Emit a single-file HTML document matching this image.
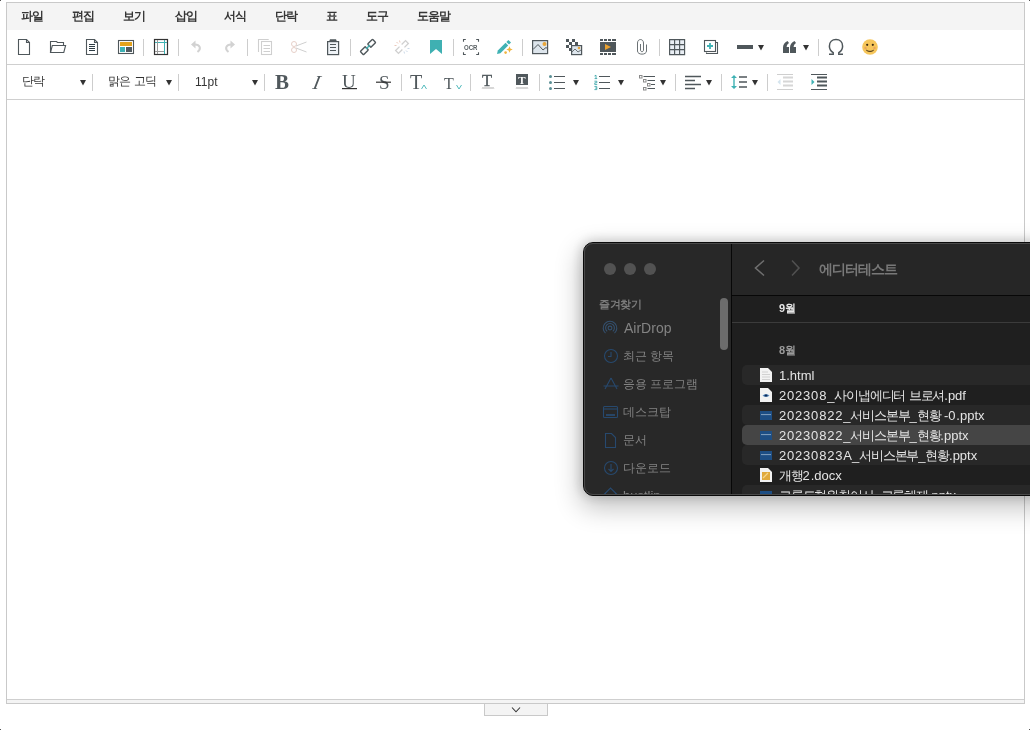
<!DOCTYPE html>
<html><head><meta charset="utf-8">
<style>
*{box-sizing:border-box;margin:0;padding:0}
html,body{width:1030px;height:730px;overflow:hidden;background:#fff;font-family:"Liberation Sans",sans-serif;position:relative}
.mi,.dd,.si,.sh,.fn,.tx{will-change:transform}
#frame{position:absolute;left:6px;top:2px;width:1019px;height:702px;border:1px solid #c9c9c9}
#menubar{position:absolute;left:0;top:0;width:1017px;height:27px;background:#f4f4f4}
.mi{position:absolute;top:4.5px;font-size:12px;font-weight:bold;color:#363636;line-height:16px;white-space:nowrap;letter-spacing:-1px}
#tb1{position:absolute;left:0;top:27px;width:1017px;height:35px;border-bottom:1px solid #cfcfcf;background:#fff}
#tb2{position:absolute;left:0;top:62px;width:1017px;height:35px;border-bottom:1px solid #cfcfcf;background:#fff}
#status{position:absolute;left:0;top:696px;width:1017px;height:4px;border-top:1px solid #cfcfcf;background:#f4f4f4}
.dd{position:absolute;font-size:12px;color:#333;white-space:nowrap;line-height:14px}
svg.ic{position:absolute;left:0;top:0;overflow:visible}
#handle{position:absolute;left:484px;top:704px;width:64px;height:12px;background:#f4f4f4;border:1px solid #c9c9c9;border-top:none}
/* finder */
#shadow{position:absolute;left:583px;top:242px;width:470px;height:253px;border-radius:10px;box-shadow:0 0 12px 2px rgba(0,0,0,0.16),0 10px 26px 3px rgba(0,0,0,0.24)}
#finder{position:absolute;left:583px;top:242px;width:470px;height:254px;border-radius:10px;overflow:hidden;background:#262626;border:1px solid #0a0a0a}
#fborder{position:absolute;left:584px;top:243px;width:468px;height:252px;border-radius:9px;box-shadow:inset 0 0 0 1px #4a4a4a;pointer-events:none}
#side{position:absolute;left:0;top:0;width:148px;height:254px;background:#282828;border-right:1px solid #070707}
.dot{position:absolute;top:20px;width:12px;height:12px;border-radius:6px;background:#525252}
.sh{position:absolute;font-size:10px;color:#7b7b7b;white-space:nowrap;line-height:12px}
.si{position:absolute;font-size:12px;color:#838383;white-space:nowrap;line-height:15px}
#main{position:absolute;left:148px;top:0;width:330px;height:254px;background:#1f1f1f}
#mtop{position:absolute;left:0;top:0;width:330px;height:53px;background:#262626;border-bottom:1px solid #070707}
.row{position:absolute;left:10px;width:320px;height:20px;border-radius:5px;background:#282828}
.k{letter-spacing:-1.2px;font-size:12.5px}
.d{letter-spacing:0.8px}
.fn{position:absolute;left:47px;font-size:13px;color:#e4e4e4;white-space:nowrap;line-height:15px}
</style></head><body>
<div id="frame">
  <div id="menubar">
    <div class="mi" style="left:14px">파일</div>
    <div class="mi" style="left:65px">편집</div>
    <div class="mi" style="left:116px">보기</div>
    <div class="mi" style="left:168px">삽입</div>
    <div class="mi" style="left:217px">서식</div>
    <div class="mi" style="left:268px">단락</div>
    <div class="mi" style="left:319px">표</div>
    <div class="mi" style="left:359px">도구</div>
    <div class="mi" style="left:410px">도움말</div>
  </div>
  <div id="tb1"></div>
  <div id="tb2"></div>
  <div id="status"></div>
</div>
<div class="dd" style="left:22px;top:74px;letter-spacing:-1px">단락</div>
<div class="dd" style="left:108px;top:74px;letter-spacing:-0.6px">맑은 고딕</div>
<div class="dd" style="left:195px;top:75px">11pt</div>
<svg class="ic" width="1030" height="110" viewBox="0 0 1030 110">
<!-- separators -->
<g fill="#cdcdcd">
<rect x="143" y="39" width="1" height="17"/><rect x="178" y="39" width="1" height="17"/><rect x="247" y="39" width="1" height="17"/>
<rect x="350" y="39" width="1" height="17"/><rect x="453" y="39" width="1" height="17"/><rect x="522" y="39" width="1" height="17"/>
<rect x="659" y="39" width="1" height="17"/><rect x="818" y="39" width="1" height="17"/>
<rect x="92" y="74" width="1" height="17"/><rect x="178" y="74" width="1" height="17"/><rect x="264" y="74" width="1" height="17"/>
<rect x="401" y="74" width="1" height="17"/><rect x="470" y="74" width="1" height="17"/><rect x="539" y="74" width="1" height="17"/>
<rect x="675" y="74" width="1" height="17"/><rect x="721" y="74" width="1" height="17"/><rect x="767" y="74" width="1" height="17"/>
</g>
<!-- dropdown arrows -->
<g fill="#333">
<path d="M80,80H86L83,85.5Z"/><path d="M166,80H172L169,85.5Z"/><path d="M252,80H258L255,85.5Z"/>
<path d="M573,80H579L576,85.5Z"/><path d="M618,80H624L621,85.5Z"/><path d="M660,80H666L663,85.5Z"/>
<path d="M706,80H712L709,85.5Z"/><path d="M752,80H758L755,85.5Z"/>
<path d="M758,45H764L761,50.5Z"/><path d="M803,45H809L806,50.5Z"/>
</g>
<g fill="none" stroke="#4f575b" stroke-width="1.1">
<!-- new doc -->
<path d="M18.5,39.5H26.5L29.5,42.5V54.5H18.5Z"/><path d="M26.5,39.5V42.5H29.5"/>
<!-- folder -->
<path d="M50.5,52.5V41.5H56.5L57.5,42.5H63.5V45.5"/><path d="M50.5,52.5H63.8L65.6,45.5H52.3Z"/>
<!-- doc lines -->
<path d="M86.5,39.5H94.5L97.5,42.5V54.5H86.5Z"/><path d="M94.5,39.5V42.5H97.5"/>
</g>
<g stroke="#2f3d45" stroke-width="1.2"><path d="M89,44.5H95M89,46.5H95M89,48.5H95M89,50.5H95"/></g>
<!-- template -->
<rect x="118.5" y="40.5" width="15" height="13" fill="none" stroke="#4f575b" stroke-width="1.1"/>
<rect x="120" y="42" width="12" height="4" fill="#e3a21c"/>
<rect x="120" y="47" width="5" height="5" fill="#3eb2b5"/>
<rect x="126" y="47" width="6" height="5" fill="#505a60"/>
<!-- table frame -->
<rect x="154.5" y="39.5" width="13" height="15" fill="none" stroke="#333" stroke-width="1.2"/>
<path d="M155,42.5H167M164.5,40V54" stroke="#3fb2b4" stroke-width="1"/>
<path d="M155,51.5H164M157.5,40V54" stroke="#9a9a9a" stroke-width="1"/>
<!-- undo / redo -->
<g fill="#d2d2d2"><path d="M191,44.5L195.5,40.5V48.5Z"/><path d="M225+0,0"/></g>
<path d="M195,44.5C199.5,44.5 202,48.5 197.5,52" fill="none" stroke="#d2d2d2" stroke-width="2"/>
<path d="M235,44.5L230.5,40.5V48.5Z" fill="#d2d2d2"/>
<path d="M231,44.5C226.5,44.5 224,48.5 228.5,52" fill="none" stroke="#d2d2d2" stroke-width="2"/>
<!-- copy -->
<g fill="none" stroke="#cfcfcf" stroke-width="1.1">
<path d="M258.5,52V39.5H268.7"/><rect x="261.5" y="41.5" width="10" height="13"/>
<path d="M263.5,45.5H270M263.5,48.5H270M263.5,51.5H270"/>
</g>
<!-- scissors -->
<g fill="none" stroke-width="1">
<circle cx="294" cy="44" r="2.5" stroke="#e6cfc8"/><circle cx="294" cy="50" r="2.5" stroke="#e6cfc8"/>
<path d="M296,46L306.5,42M296,48L306.5,52" stroke="#cfcfcf"/>
</g>
<!-- clipboard -->
<rect x="327.6" y="41.6" width="11" height="13" fill="#eef2f6" stroke="#4f575b" stroke-width="1.2"/>
<path d="M330,39.2H336L337,41.8H329Z" fill="#4f575b"/>
<path d="M330,44.5H336M330,47.5H336M330,50.5H336" stroke="#4f575b" stroke-width="1.1"/>
<!-- link -->
<g transform="rotate(-45 368 47)" fill="none" stroke="#4f575b" stroke-width="1.4">
<rect x="359.3" y="44.7" width="7" height="4.6" rx="0.8"/><rect x="369.7" y="44.7" width="7" height="4.6" rx="0.8"/>
</g>
<path d="M366,49L370,45" stroke="#3fb2b4" stroke-width="1.4"/>
<!-- unlink -->
<g transform="rotate(-45 402 47)" fill="none" stroke="#d0d0d0" stroke-width="1.3">
<path d="M400.5,45H395V49H400.5"/><path d="M403.5,45H409V49H403.5"/>
</g>
<path d="M396.5,42L398,43.5M399.5,40.5L400,42.5M394.5,45.5H396.5" stroke="#e9c2b2" stroke-width="0.9"/>
<path d="M407.5,52L406,50.5M404.5,53.5L404,51.5M409.5,48.5H407.5" stroke="#c4d4e4" stroke-width="0.9"/>
<!-- bookmark -->
<path d="M430,40H442V54L436,49L430,54Z" fill="#3fb0b2"/>
<!-- OCR -->
<g fill="none" stroke="#4f575b" stroke-width="1.1">
<path d="M463.5,41.8V39.5H465.8M476.2,39.5H478.5V41.8M478.5,52.2V54.5H476.2M465.8,54.5H463.5V52.2"/>
</g>
<text x="464" y="49.8" font-family="Liberation Sans" font-size="7.6" font-weight="bold" fill="#5a6164" textLength="13.5" lengthAdjust="spacingAndGlyphs">OCR</text>
<!-- pencil -->
<path d="M497,54L497.8,50.6L505.6,42.8L508.2,45.4L500.4,53.2Z" fill="#3fb2b4"/>
<path d="M506.4,42L508.4,40L511,42.6L509,44.6Z" fill="#3fb2b4"/>
<path d="M509.5,46.3L510.4,48.6L512.7,49.5L510.4,50.4L509.5,52.7L508.6,50.4L506.3,49.5L508.6,48.6Z" fill="#f0b540"/>
<circle cx="505.6" cy="52.6" r="1.3" fill="#f0b540"/>
<!-- image -->
<rect x="532.6" y="40.6" width="15" height="13" fill="#dde5ec" stroke="#4f575b" stroke-width="1.2"/>
<path d="M533,49.5L538,44.5L543,50L546,47.5L548,49" fill="none" stroke="#4f575b" stroke-width="1"/>
<circle cx="544.5" cy="44" r="2" fill="#e8a63a"/>
<!-- image checker -->
<g fill="#4f575b">
<rect x="566" y="39" width="3" height="3"/><rect x="572" y="39" width="3" height="3"/>
<rect x="569" y="42" width="3" height="3"/><rect x="575" y="42" width="3" height="3"/>
<rect x="566" y="45" width="3" height="3"/><rect x="569" y="48" width="3" height="3"/>
</g>
<rect x="571.6" y="45.6" width="10" height="9" fill="#dde5ec" stroke="#4f575b" stroke-width="1.2"/>
<path d="M572,52L575,49L578,52L581,50" fill="none" stroke="#4f575b" stroke-width="0.8"/>
<circle cx="579" cy="48" r="1.3" fill="#e8a63a"/>
<!-- video -->
<g fill="#4f575b">
<rect x="600" y="39" width="3" height="2"/><rect x="604" y="39" width="3" height="2"/><rect x="608" y="39" width="3" height="2"/><rect x="612" y="39" width="4" height="2"/>
<rect x="600" y="42" width="16" height="10"/>
<rect x="600" y="53" width="3" height="2"/><rect x="604" y="53" width="3" height="2"/><rect x="608" y="53" width="3" height="2"/><rect x="612" y="53" width="4" height="2"/>
</g>
<path d="M605,44L611,47L605,50Z" fill="#e8a030"/>
<!-- clip -->
<path d="M646.5,44.5V51C646.5,55.2 637.5,55.2 637.5,51V43C637.5,38.4 643.5,38.4 643.5,43V50C643.5,52.2 640.5,52.2 640.5,50V44" fill="none" stroke="#50585c" stroke-width="0.85"/>
<!-- table -->
<rect x="669.5" y="39.5" width="15.3" height="15.3" fill="#e9eef4"/>
<path d="M669.6,39.6H684.6V54.6H669.6ZM674.6,39.6V54.6M679.6,39.6V54.6M669.6,44.6H684.6M669.6,49.6H684.6" fill="none" stroke="#4f575b" stroke-width="1.15"/>
<!-- add frame -->
<path d="M706.5,52.5V53.5H717.5V42.5H716" fill="none" stroke="#4f575b" stroke-width="1.1"/>
<rect x="704.5" y="40.5" width="11" height="11" fill="#fff" stroke="#4f575b" stroke-width="1.1"/>
<path d="M707,46H713M710,43V49" stroke="#3fb2b4" stroke-width="1.8"/>
<!-- hr -->
<rect x="737" y="45" width="16" height="4" fill="#4f575b"/>
<!-- quote -->
<g fill="#4f575b">
<path d="M783,53V47.5C783,44.5 784.5,42.5 787.5,41L789,43C787.8,43.8 786.8,45 786.6,47H789V53Z"/>
<path d="M790,53V47.5C790,44.5 791.5,42.5 794.5,41L796,43C794.8,43.8 793.8,45 793.6,47H796V53Z"/>
</g>
<!-- omega -->
<path d="M829,54.2H833.2V52.6C830.6,51 829.4,48.6 829.4,46.2C829.4,42.2 832.2,39.6 836,39.6C839.8,39.6 842.6,42.2 842.6,46.2C842.6,48.6 841.4,51 838.8,52.6V54.2H843" fill="none" stroke="#4f575b" stroke-width="1.5"/>
<!-- smiley -->
<circle cx="870" cy="47" r="7.8" fill="#f6c65b"/>
<circle cx="867.2" cy="44.8" r="1.1" fill="#3b2a12"/><circle cx="872.8" cy="44.8" r="1.1" fill="#3b2a12"/>
<circle cx="865.5" cy="48" r="1.2" fill="#eaa35a"/><circle cx="874.5" cy="48" r="1.2" fill="#eaa35a"/>
<path d="M866.3,50.2C868,51.8 872,51.8 873.7,50.2" fill="none" stroke="#3b2a12" stroke-width="1"/>

<!-- toolbar 2 -->
<text x="275" y="89" font-family="Liberation Serif" font-size="21" font-weight="bold" fill="#50585c">B</text>
<text x="312" y="89" font-family="Liberation Serif" font-size="20" font-style="italic" fill="#50585c" transform="translate(312 89) skewX(-12) translate(-312 -89)">I</text>
<text x="342" y="88" font-family="Liberation Serif" font-size="19" fill="#50585c">U</text>
<rect x="342" y="88" width="15" height="1.2" fill="#333"/>
<text x="379" y="89" font-family="Liberation Serif" font-size="19" fill="#50585c">S</text>
<rect x="376" y="81.6" width="15" height="1.2" fill="#333"/>
<text x="410" y="89" font-family="Liberation Serif" font-size="20" fill="#50585c">T</text>
<path d="M421.5,89L424,85L426.5,89" fill="none" stroke="#3fb2b4" stroke-width="0.9"/>
<text x="444" y="89" font-family="Liberation Serif" font-size="16" fill="#50585c">T</text>
<path d="M456.5,85L459,89L461.5,85" fill="none" stroke="#3fb2b4" stroke-width="0.9"/>
<text x="482" y="85.5" font-family="Liberation Serif" font-size="16.5" fill="#50585c" stroke="#50585c" stroke-width="0.4">T</text>
<path d="M482,89L483,87L484,89L485,87L486,89L487,87L488,89L489,87L490,89L491,87L492,89L493,87L494,89" fill="none" stroke="#c4c4c4" stroke-width="0.8"/>
<rect x="516" y="74" width="12" height="11" fill="#50585c"/>
<text x="522" y="83.8" font-family="Liberation Serif" font-size="11" font-weight="bold" fill="#fff" text-anchor="middle">T</text>
<path d="M516,89L517,87L518,89L519,87L520,89L521,87L522,89L523,87L524,89L525,87L526,89L527,87L528,89" fill="none" stroke="#c4c4c4" stroke-width="0.8"/>
<!-- bullet list -->
<g fill="#5a8f95"><circle cx="550.5" cy="76.5" r="1.5"/><circle cx="550.5" cy="82.5" r="1.5"/><circle cx="550.5" cy="88.5" r="1.5"/></g>
<path d="M554,76.5H565M554,82.5H565M554,88.5H565" stroke="#4f575b" stroke-width="1.2"/>
<!-- number list -->
<path d="M594.5,76 L596,75.2V78.6M594.6,78.6H597.2M594.4,81.2H596.8V82.8H594.8V84.6H597.2M594.4,86.6H596.8V89.6H594.4M595.2,88.1H596.8" fill="none" stroke="#3fa8ab" stroke-width="0.9"/>
<path d="M599,76.5H610M599,82.5H610M599,88.5H610" stroke="#4f575b" stroke-width="1.2"/>
<!-- multilevel -->
<g fill="none" stroke="#8a8a8a" stroke-width="1"><rect x="639.5" y="75.5" width="2.5" height="2.5"/><rect x="643.5" y="79.5" width="2.5" height="2.5"/><rect x="647.5" y="83.5" width="2.5" height="2.5"/><rect x="643.5" y="87.5" width="2.5" height="2.5"/></g>
<path d="M643.5,76.5H655M647.5,80.5H655M651,84.5H655M647.5,88.5H655" stroke="#4f575b" stroke-width="1.1"/>
<!-- align left -->
<path d="M685,76.5H701M685,80.5H695M685,84.5H701M685,88.5H695" stroke="#4f575b" stroke-width="1.6"/>
<!-- line height -->
<path d="M734,76V88" stroke="#3fb2b4" stroke-width="1.4"/>
<path d="M731,78L734,75L737,78ZM731,86L734,89L737,86Z" fill="#3fb2b4"/>
<path d="M739,77H747M739,82H747M739,87H747" stroke="#4f575b" stroke-width="1.6"/>
<!-- outdent -->
<path d="M777,74.5H793M783,77.5H793M783,81.5H793M783,85.5H793M777,89.5H793" stroke="#cfcfcf" stroke-width="1"/>
<path d="M783,77.5H793M783,81.5H793M783,85.5H793" stroke="#d6d6d6" stroke-width="1.8"/>
<path d="M780.5,79L777.5,82L780.5,85Z" fill="#d4e4ee"/>
<!-- indent -->
<path d="M811,74.5H827M811,89.5H827" stroke="#4f575b" stroke-width="1"/>
<path d="M817,77.5H827M817,81.5H827M817,85.5H827" stroke="#4f575b" stroke-width="1.8"/>
<path d="M811.5,79L814.5,82L811.5,85Z" fill="#3fb2b4"/>
<!-- handle chevron -->
</svg>
<div id="handle"></div>
<svg class="ic" width="1030" height="730" viewBox="0 0 1030 730" style="pointer-events:none">
<path d="M512,707.5L516,711.8L520,707.5" fill="none" stroke="#333" stroke-width="1.05"/>
</svg>
<div id="shadow"></div>
<div id="finder">
  <div id="side">
    <div class="dot" style="left:20px"></div>
    <div class="dot" style="left:40px"></div>
    <div class="dot" style="left:60px"></div>
    <div class="sh" style="left:15px;top:55px;font-size:11px;font-weight:bold;letter-spacing:-0.5px">즐겨찾기</div>
    <div class="si" style="left:40px;top:78px;font-size:14px">AirDrop</div>
    <div class="si" style="left:39px;top:106px">최근 항목</div>
    <div class="si" style="left:39px;top:134px">응용 프로그램</div>
    <div class="si" style="left:39px;top:162px">데스크탑</div>
    <div class="si" style="left:39px;top:190px">문서</div>
    <div class="si" style="left:39px;top:218px">다운로드</div>
    <div class="si" style="left:39px;top:245px;font-size:13px">bustlin</div>
    <div style="position:absolute;left:136px;top:55px;width:8px;height:52px;border-radius:4px;background:#6c6c6c"></div>
    <svg class="ic" width="148" height="254" viewBox="584 243 148 254">
      <g fill="none" stroke="#27496e" stroke-width="1.1">
        <path d="M605.5,333.2A6.8,6.8 0 1 1 614.5,333.2" stroke="#34506e"/><path d="M607.2,331.3A4.4,4.4 0 1 1 612.8,331.3" stroke="#34506e"/><circle cx="610" cy="328" r="1.9" stroke="#34506e"/>
        <circle cx="611" cy="356" r="6.5"/><path d="M611,352V356.5H608"/>
        <path d="M605,389L611,378M617,389L611,378M603.5,386H618.5"/>
        <rect x="603.5" y="406.5" width="14" height="11" rx="1"/><path d="M603.5,409H617.5"/><path d="M606,415H615" stroke-width="1.8"/>
        <path d="M605.5,433.5H611.5L615.5,437.5V447.5H605.5Z"/>
        <circle cx="611" cy="468" r="6.5"/><path d="M611,464V471.5M608.5,469L611,471.5L613.5,469"/>
        <path d="M603.5,495L610.5,488L617.5,495M605.5,493V498M615.5,493V498"/>
      </g>
    </svg>
  </div>
  <div id="main">
    <div id="mtop">
      <div class="tx" style="position:absolute;left:87px;top:17px;font-size:14px;font-weight:bold;color:#787878;white-space:nowrap;line-height:18px;letter-spacing:-1px">에디터테스트</div>
    </div>
    <div class="tx" style="position:absolute;left:47px;top:58px;font-size:11px;font-weight:bold;color:#e6e6e6;line-height:14px">9월</div>
    <div style="position:absolute;left:0;top:79px;width:330px;height:1px;background:#3b3b3b"></div>
    <div class="tx" style="position:absolute;left:47px;top:100px;font-size:11px;font-weight:bold;color:#9a9a9a;line-height:14px">8월</div>
    <div class="row" style="top:122px"></div>
    <div class="row" style="top:162px"></div>
    <div class="row" style="top:182px;background:#454545"></div>
    <div class="row" style="top:202px"></div>
    <div class="row" style="top:242px"></div>
    <div class="fn" style="top:125px">1.html</div>
    <div class="fn" style="top:145px"><span class="d">202308</span>_<span class="k">사이냅에디터</span> <span class="k">브로셔</span>.pdf</div>
    <div class="fn" style="top:165px"><span class="d">20230822</span>_<span class="k">서비스본부</span>_<span class="k">현황</span> -<span class="d">0</span>.pptx</div>
    <div class="fn" style="top:185px"><span class="d">20230822</span>_<span class="k">서비스본부</span>_<span class="k">현황</span>.pptx</div>
    <div class="fn" style="top:205px"><span class="d">20230823</span>A_<span class="k">서비스본부</span>_<span class="k">현황</span>.pptx</div>
    <div class="fn" style="top:225px"><span class="k">개행</span><span class="d">2</span>.docx</div>
    <div class="fn" style="top:245px"><span class="k">그룹드혁원취이사</span>_<span class="k">그룹해제</span>.pptx</div>
    <svg class="ic" width="330" height="254" viewBox="732 243 330 254">
      <path d="M764,260.5L755.5,268L764,275.5" fill="none" stroke="#6e6e6e" stroke-width="1.6"/>
      <path d="M792,260.5L799,268L792,275.5" fill="none" stroke="#505050" stroke-width="1.6"/>
      <!-- doc icons -->
      <path d="M760,368H768L772,372V382H760Z" fill="#f2f2f2"/><path d="M762,372H768M762,374.5H770M762,377H770M762,379.5H770" stroke="#c8c8c8" stroke-width="0.8"/>
      <path d="M760,388H768L772,392V402H760Z" fill="#f2f2f2"/><path d="M762.5,395.5Q766,392.5 769.5,395.5Q766,398.5 762.5,395.5Z" fill="#5a8cc0"/><ellipse cx="766" cy="395.5" rx="1.6" ry="1.1" fill="#0e2a55"/>
      <rect x="760" y="411" width="12" height="9" fill="#1d4e84"/><path d="M761,414.6H771" stroke="#c8d6e6" stroke-width="0.6"/>
      <rect x="760" y="431" width="12" height="9" fill="#1d4e84"/><path d="M761,434.6H771" stroke="#c8d6e6" stroke-width="0.6"/>
      <rect x="760" y="451" width="12" height="9" fill="#1d4e84"/><path d="M761,454.6H771" stroke="#c8d6e6" stroke-width="0.6"/>
      <path d="M760,468H768L772,472V482H760Z" fill="#f2f2f2"/><rect x="762" y="472" width="8" height="8" fill="#e0a93c"/><path d="M763,478L768,473" stroke="#f5d58a" stroke-width="1.2"/>
      <rect x="760" y="491" width="12" height="9" fill="#1d4e84"/>
    </svg>
  </div>
</div>
<div id="fborder"></div>
<div style="position:absolute;left:0;top:0;width:1px;height:1px;background:#555"></div><div style="position:absolute;left:1029px;top:0;width:1px;height:1px;background:#555"></div><div style="position:absolute;left:0;top:729px;width:1px;height:1px;background:#555"></div><div style="position:absolute;left:1029px;top:729px;width:1px;height:1px;background:#555"></div>
</body></html>
